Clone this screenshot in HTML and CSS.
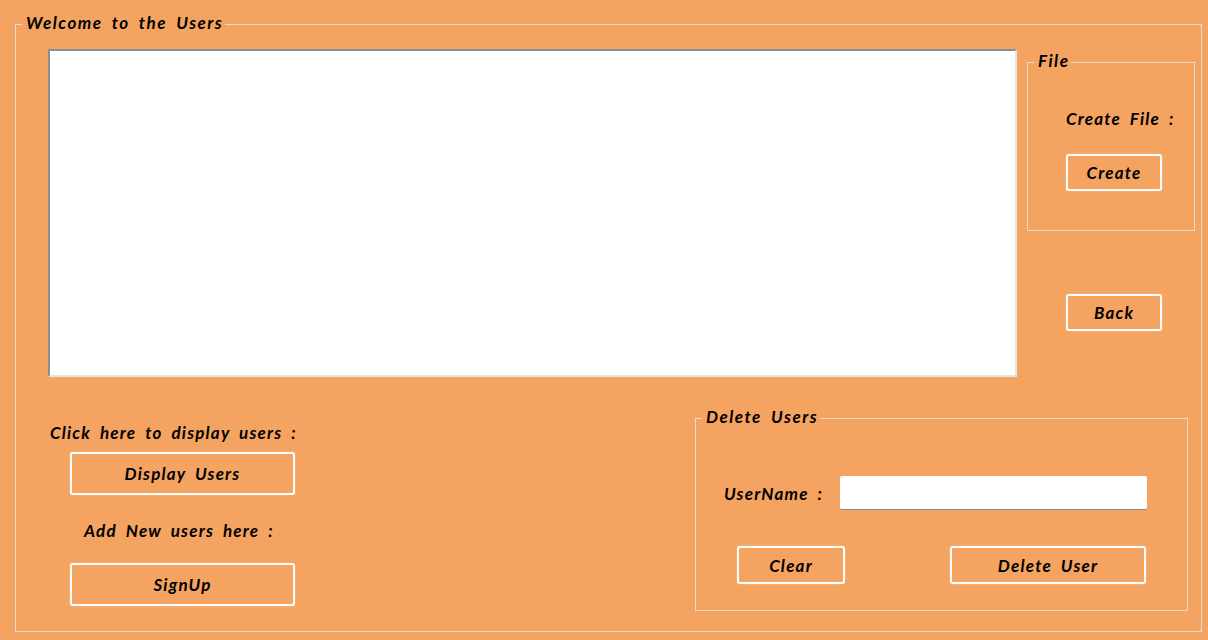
FILE: index.html
```html
<!DOCTYPE html>
<html lang="en">
<head>
    <meta charset="UTF-8">
    <title>Users</title>
    <link rel="stylesheet" href="styles.css">
</head>
<body>
    <fieldset class="group main-group">
        <legend>Welcome to the Users</legend>
        <div class="main-body">
            <div class="top-row">
                <textarea class="user-list"></textarea>
                <div class="side">
                    <fieldset class="group file-group">
                        <legend>File</legend>
                        <div class="file-body">
                            <div class="label">Create File :</div>
                            <button class="btn create-btn">Create</button>
                        </div>
                    </fieldset>
                    <button class="btn back-btn">Back</button>
                </div>
            </div>
            <div class="bottom-row">
                <div class="actions">
                    <div class="label display-label">Click here to display users :</div>
                    <button class="btn wide-btn">Display Users</button>
                    <div class="label signup-label">Add New users here :</div>
                    <button class="btn wide-btn signup-btn">SignUp</button>
                </div>
                <fieldset class="group delete-group">
                    <legend>Delete Users</legend>
                    <div class="delete-body">
                        <div class="name-row">
                            <label class="label name-label" for="username">UserName :</label>
                            <input class="name-input" id="username" type="text">
                        </div>
                        <div class="delete-buttons">
                            <button class="btn clear-btn">Clear</button>
                            <button class="btn delete-btn">Delete User</button>
                        </div>
                    </div>
                </fieldset>
            </div>
        </div>
    </fieldset>
</body>
</html>
```

FILE: styles.css
```css
body {
    margin: 0;
    height: 640px;
    overflow: hidden;
    background: #f4a460;
    color: #000;
    font-family: 'Lato', 'Open Sans', sans-serif;
    font-size: 17px;
    font-style: italic;
    font-weight: 700;
    line-height: 20px;
    letter-spacing: 1.2px;
    word-spacing: 4px;
}

.group {
    margin: 0;
    padding: 0;
    min-width: 0;
    box-sizing: border-box;
    border: 1px solid #e4dcd4;
}

legend {
    margin-left: 6px;
    padding: 0 2px 0 4px;
    height: 20px;
    line-height: 18px;
    letter-spacing: 1.5px;
}

.label {
    line-height: 22px;
}

.main-group {
    width: 1187px;
    height: 618px;
    margin: 14px 0 0 15px;
}

.main-body {
    padding: 15px 0 0 32px;
}

.top-row {
    display: flex;
    gap: 10px;
}

.user-list {
    display: block;
    width: 969px;
    height: 328px;
    margin: 0;
    box-sizing: border-box;
    resize: none;
    background: #fff;
    border-style: solid;
    border-width: 2px;
    border-color: #8a8e92 #e4e4e4 #e4e4e4 #8a8e92;
    outline: none;
}

.side {
    width: 168px;
    padding-top: 3px;
}

.file-group {
    width: 168px;
    height: 179px;
}

.file-body {
    padding: 36px 0 0 38px;
}

.btn {
    display: block;
    margin: 0;
    padding: 1px 0 0;
    box-sizing: border-box;
    background: transparent;
    border: 2px solid #fff;
    border-radius: 3px;
    box-shadow: 0 0 1px #fff;
    color: inherit;
    font: inherit;
    letter-spacing: inherit;
    word-spacing: inherit;
}

.create-btn {
    width: 96px;
    height: 37px;
    margin-top: 24px;
}

.back-btn {
    width: 96px;
    height: 37px;
    margin: 63px 0 0 39px;
}

.bottom-row {
    display: flex;
}

.actions {
    width: 647px;
    padding-top: 45px;
}

.display-label {
    margin-left: 2px;
}

.wide-btn {
    width: 225px;
    height: 43px;
    margin: 8px 0 0 22px;
}

.signup-label {
    margin: 25px 0 0 36px;
}

.signup-btn {
    margin-top: 21px;
}

.delete-group {
    width: 493px;
    height: 203px;
    margin-top: 31px;
}

.delete-body {
    padding: 48px 0 0 28px;
}

.name-row {
    display: flex;
    align-items: center;
}

.name-label {
    width: 116px;
    padding-top: 2px;
}

.name-input {
    width: 307px;
    height: 34px;
    margin: 0;
    padding: 0;
    box-sizing: border-box;
    background: #fff;
    border: none;
    border-bottom: 1px solid #8a8a8a;
    border-radius: 2px;
}

.delete-buttons {
    display: flex;
    gap: 105px;
    margin: 36px 0 0 13px;
}

.clear-btn {
    width: 108px;
    height: 38px;
}

.delete-btn {
    width: 196px;
    height: 38px;
}
```
